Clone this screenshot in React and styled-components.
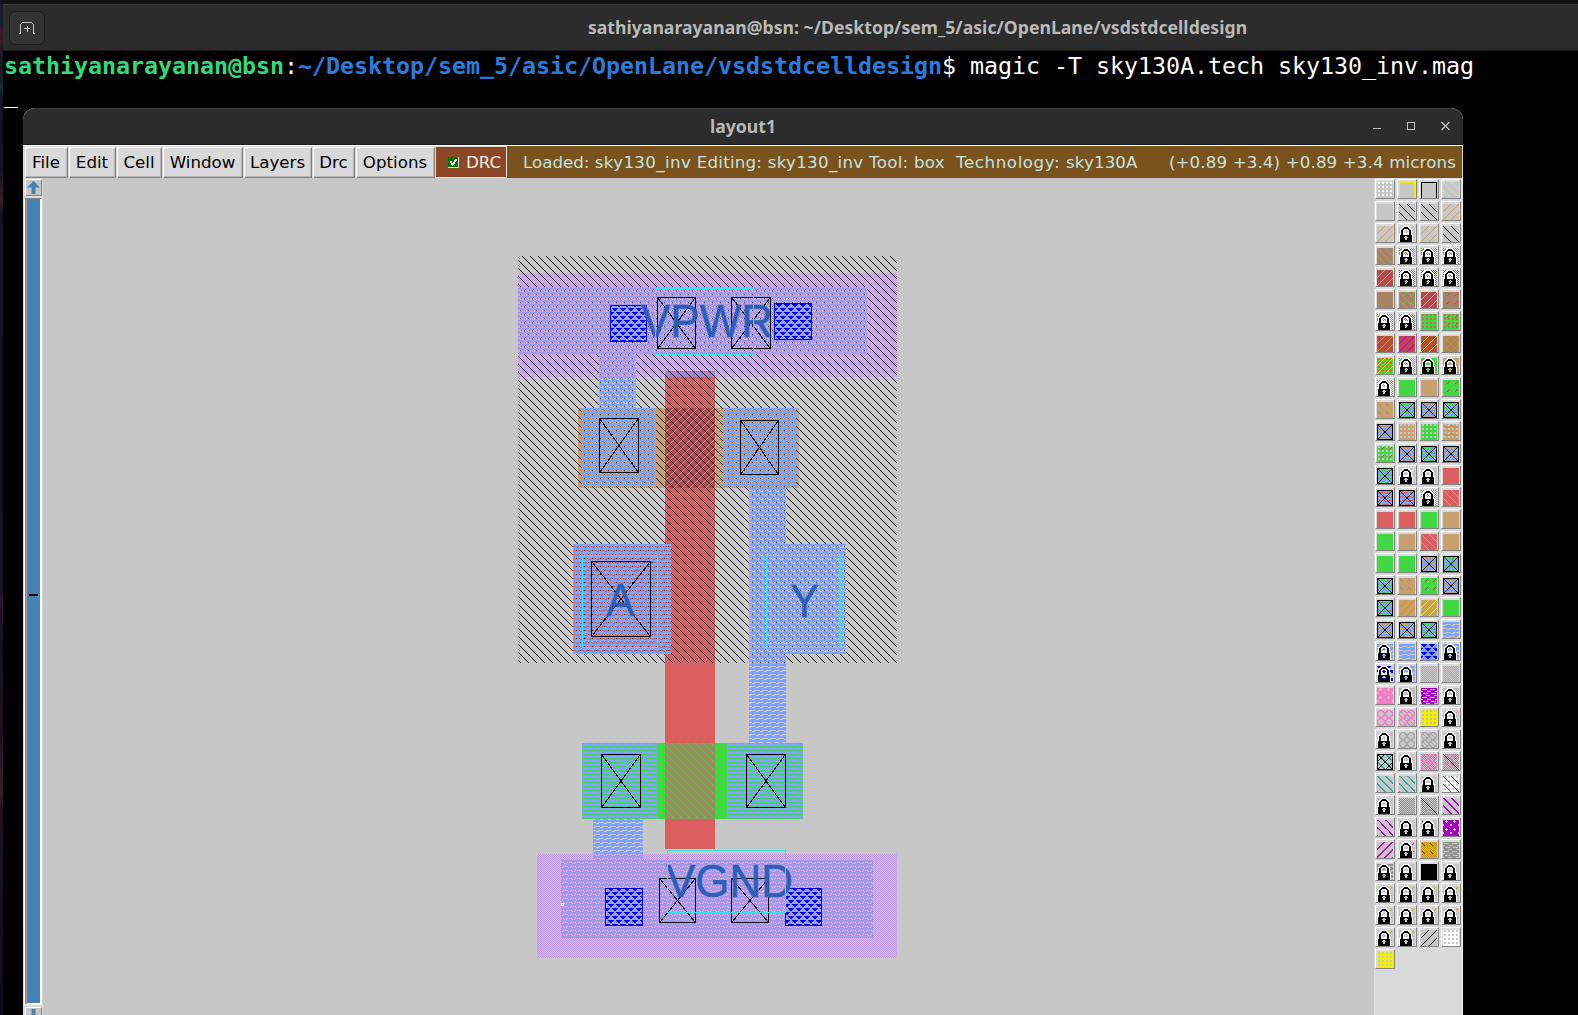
import React from "react";
import styled, { createGlobalStyle } from "styled-components";

const C = {
  gray: "#c7c7c7",
  panel: "#d9d9d9",
  brown: "#a88466",
  crimson: "#b84850",
  green: "#41d941",
  tan: "#c8a070",
  red: "#dc5f5f",
  blue: "#7da4fa",
  via: "#0000f5",
  purple: "#be98e0",
  pink: "#ff78c8",
  violet: "#a800c0",
  magenta: "#d000a0",
  teal: "#28a8a0",
  gold: "#c89810",
  yellow: "#f0f000",
  dark: "#909090",
  label: "#2d5fb8",
  cyan: "#30e8e8",
};

const STIPPLES = {
  back: ["X.......", ".X......", "..X.....", "...X....", "....X...", ".....X..", "......X.", ".......X"],
  slash: [".......X", "......X.", ".....X..", "....X...", "...X....", "..X.....", ".X......", "X......."],
  backBold: ["XX......", ".XX.....", "..XX....", "...XX...", "....XX..", ".....XX.", "......XX", "X......X"],
  slashBold: ["......XX", ".....XX.", "....XX..", "...XX...", "..XX....", ".XX.....", "XX......", "X......X"],
  backDash: ["........", ".X......", "..X.....", "...X....", "........", "........", "........", "........"],
  slashDash: ["........", "......X.", ".....X..", "....X...", "........", "........", "........", "........"],
  dots: [".XX.", ".XX.", "....", "...."],
  check: ["X.", ".X"],
  metal: ["XXXXXXXX", "X.....XX", "XXXXXXXX", "..XXXX..", "XXXXXXXX", "XX.....X", "XXXXXXXX", ".XXXX..."],
  metalWave: ["XXXXXXXX", "XXXXXXXX", "XX......", "...XXXXX", "XXXXXXXX", "XXXXXXXX", "....XX..", "XXXX...X"],
  tri: ["XXXXXX..", ".XXXX...", "..XX....", "........", "XX..XXXX", "X....XXX", "......XX", "........"],
  ring: ["..XXXX..", ".XX..XX.", "XX....XX", "X......X", "X......X", "XX....XX", ".XX..XX.", "..XXXX.."],
  plus: ["...X....", "..XXX...", "...X....", "........", "X......X", "X......X", "........", "........"],
  speck: ["........", "..X.....", ".X......", "........", "........", "X.......", "........", "........"],
};
STIPPLES.metalCheck = STIPPLES.metalWave.map((row, y) =>
  [...row].map((ch, i) => ((i + y) % 2 === 0 ? ch : ".")).join("")
);

const pid = (shape, color) => `p-${shape}-${color.replace("#", "")}`;
const fill = (shape, color) => `url(#${pid(shape, color)})`;

function runs(row) {
  const out = [];
  let i = 0;
  while (i < row.length) {
    const ch = row[i];
    let j = i;
    while (j < row.length && row[j] === ch) j++;
    if (ch !== ".") out.push([i, j - i, ch]);
    i = j;
  }
  return out;
}

function Stipple({ shape, color, dx = 0, id }) {
  const rows = STIPPLES[shape];
  return (
    <pattern id={id || pid(shape, color)} x={dx} y="0" width={rows[0].length} height={rows.length} patternUnits="userSpaceOnUse">
      {rows.map((r, y) =>
        runs(r).map(([x, w]) => <rect key={`${x}-${y}`} x={x} y={y} width={w} height="1" fill={color} />)
      )}
    </pattern>
  );
}

/* Palette swatches: a plain fill, with stipples over it and an optional mark */
const s = (bg, ...over) => ({ bg, over });
const k = (bg, ...over) => ({ bg, over, mark: "lock" });
const x = (bg, ...over) => ({ bg, over: [...over, ["metalWave", C.blue]], mark: "contact" });
const G = C.gray;
const lockBrown = () => k("#ffffff", ["check", C.brown], ["speck", C.green]);
const lockRed = () => k("#ffffff", ["check", C.crimson]);
const lockPurple = () => k(G, ["check", C.purple]);
const lockGold = () => k(G, ["slashDash", C.gold]);

const PALETTE = [
  s(G, ["dots", "#ffffff"]), { bg: G, over: [], mark: "frame", color: C.yellow }, { bg: G, over: [], mark: "frame", color: "#000000" }, s(G, ["back", C.yellow]),
  s(G), s(G, ["back", "#000000"]), s(G, ["back", "#000000"]), s(G, ["slash", C.tan]),
  s(G, ["slash", C.tan]), k(G, ["back", C.yellow]), s(G, ["slash", C.tan]), s(G, ["back", "#000000"]),
  s(C.brown, ["back", C.green]), lockBrown(), lockBrown(), lockBrown(),
  s(C.crimson, ["slash", C.tan]), lockRed(), k("#ffffff", ["check", C.crimson], ["slashDash", C.yellow]), lockRed(),
  s(C.brown), s(C.brown, ["back", C.green], ["slashDash", C.green]), s(C.crimson, ["slash", "#e0a090"]), s(C.brown, ["slashDash", C.crimson]),
  lockBrown(), lockRed(), s(C.green, ["dots", C.red]), s(C.green, ["dots", C.red], ["slashDash", C.crimson]),
  s(C.crimson, ["slash", C.gold]), s(C.crimson, ["slash", C.magenta]), s(C.crimson, ["slash", C.yellow]), s(C.brown, ["back", C.green], ["slash", C.gold]),
  s(C.green, ["dots", C.red], ["slash", C.yellow]), lockBrown(), k(C.green, ["speck", C.red]), k(C.tan),
  k("#ffffff", ["check", C.green]), s(C.green), s(C.tan), s(C.green, ["slashDash", C.crimson]),
  s(C.tan, ["backDash", C.brown]), x(C.green), x(C.tan), x(C.green),
  x(C.tan), s(C.tan, ["dots", G]), s(C.green, ["dots", G]), s(C.tan, ["dots", G], ["backDash", C.brown]),
  s(C.green, ["dots", G], ["slashDash", C.crimson]), x(C.tan, ["dots", G]), x(C.green, ["dots", G]), x(C.tan, ["dots", G]),
  x(C.green, ["dots", G]), k(G, ["slashDash", "#ffffff"]), k(G), s(C.red),
  x(C.red), x(C.red, ["backDash", C.tan]), k("#ffffff", ["check", C.red]), s(C.red, ["back", C.tan]),
  s(C.red), s(C.red), s(C.green), s(C.tan),
  s(C.green), s(C.tan), s(C.red, ["back", C.tan]), s(C.tan),
  s(C.green), s(C.green), x(C.tan), x(C.green),
  x(C.green, ["dots", G]), s(C.tan, ["backDash", C.brown]), s(C.green, ["slashDash", C.crimson]), x(C.tan),
  x(C.green, ["slashDash", C.crimson]), s(C.tan, ["slash", C.gold]), s(C.tan, ["slash", C.yellow]), s(C.green),
  x(C.tan, ["slash", C.gold]), x(C.tan, ["slash", C.yellow]), x(C.green), s(G, ["metalWave", C.blue]),
  k(G, ["metalWave", C.blue]), s(G, ["metalWave", C.blue], ["back", C.tan]), s(C.blue, ["tri", C.via]), k(G, ["metalWave", C.blue]),
  k(G, ["tri", C.via]), k(G, ["metalWave", C.blue]), s(G, ["check", C.purple]), s(G, ["check", C.purple], ["back", C.tan]),
  s(C.pink, ["plus", G]), lockPurple(), s(G, ["metal", C.violet]), lockPurple(),
  s(G, ["ring", C.pink]), s(G, ["ring", C.pink], ["back", C.tan]), s(C.yellow, ["dots", "#d0c090"]), k(G, ["slashDash", C.pink]),
  k(G, ["slashDash", C.pink]), s(G, ["ring", "#a8a8a8"]), s(G, ["ring", "#a8a8a8"], ["back", C.tan]), k(G),
  { bg: G, over: [["backBold", C.teal], ["slash", "#000000"]], mark: "contact" }, k(G), s(G, ["check", C.dark], ["ring", C.pink]), { bg: G, over: [["check", C.dark], ["plus", C.pink]], mark: "diag" },
  s(G, ["backBold", C.teal]), s(G, ["backBold", C.teal], ["backDash", C.tan]), k(G, ["backDash", C.teal]), s("#ffffff", ["dots", G], ["back", C.violet]),
  k(G, ["backDash", C.teal]), s(G, ["check", C.dark]), { bg: G, over: [["check", C.dark]], mark: "diag" }, s(G, ["backBold", C.violet]),
  s(G, ["backBold", C.violet], ["backDash", C.tan]), k(G, ["backDash", C.violet]), k(G, ["backDash", C.violet]), s(C.violet, ["plus", G]),
  s(G, ["slashBold", C.magenta]), k(G, ["slashDash", C.magenta]), s(C.gold, ["check", "#d0b050"], ["backDash", C.magenta]), s(G, ["metal", C.dark]),
  k(G, ["metalWave", C.dark]), k(G, ["backDash", C.yellow]), s("#000000"), k(G),
  lockGold(), lockGold(), lockGold(), lockGold(),
  lockGold(), lockGold(), lockGold(), lockGold(),
  lockGold(), lockGold(), s(G, ["slash", "#000000"]), s("#ffffff", ["dots", G]),
  s(C.yellow, ["dots", G]),
];

const USED = new Map();
PALETTE.forEach((cell) => cell.over.forEach(([shape, color]) => USED.set(pid(shape, color), [shape, color])));
[
  ["check", C.purple], ["metalWave", C.blue], ["tri", C.via], ["back", C.green],
  ["metalWave", C.purple], ["metalCheck", C.purple],
].forEach(([a, b]) => USED.set(pid(a, b), [a, b]));

const LOCK = [
  ".....WWWWWW.....",
  "....WWKKKKWW....",
  "...WWKKKKKKWW...",
  "..WWKKWWWWKKWW..",
  "..WKKWW..WWKKW..",
  "..WKKW....WKKW..",
  "..WKKW....WKKW..",
  "..WKKWWWWWWKKW..",
  ".WWKKWWWWWWKKWW.",
  ".WKKKKKKKKKKKKW.",
  ".WKKKKK..KKKKKW.",
  ".WKKKK....KKKKW.",
  ".WKKKKK..KKKKKW.",
  ".WKKKKK..KKKKKW.",
  ".WKKKKKKKKKKKKW.",
  ".WKKKKKKKKKKKKW.",
];

const Global = createGlobalStyle`
  html, body { margin: 0; padding: 0; background: #000; overflow: hidden; }
  * { box-sizing: border-box; }
`;

const Desktop = styled.div`
  display: grid;
  grid-template-columns: 3px 1fr;
  width: 1578px;
  height: 1015px;
  overflow: hidden;
  background: #131313;
`;
const Wallpaper = styled.div`
  background: linear-gradient(#131313 0 4px, #1a1c26 4px 26px, #3d1a20 32px, #2a1c24 44px, #17181f 60px, #17202a 80px, #1c3128 86px, #151720 96px, #15131f 170px, #2d2224 200px, #15131f 215px, #141620 590px, #2a1528 600px, #141318 640px, #20131e 740px, #2d2529 790px, #20131e 810px, #120c1a 1015px);
`;
const Terminal = styled.main`
  display: flex;
  flex-direction: column;
  min-width: 0;
  margin-top: 4px;
  background: #000;
  overflow: hidden;
`;
const TermHeader = styled.header`
  display: grid;
  grid-template-columns: 1fr auto 1fr;
  align-items: center;
  flex: none;
  width: 1829px;
  height: 47px;
  padding: 0 6px;
  background: #2c2c2c;
  border-top: 1px solid #3b3b3b;
  border-bottom: 1px solid #1c1c1c;
`;
const TabButton = styled.button`
  display: flex;
  align-items: center;
  justify-content: center;
  width: 36px;
  height: 34px;
  padding: 0;
  border: 1px solid #1c1c1c;
  border-radius: 6px;
  background: #333;
`;
const Title = styled.h1`
  margin: 0;
  padding-bottom: 2px;
  font: 700 17.6px "Noto Sans", "Open Sans", sans-serif;
  letter-spacing: 0.03px;
  color: #b9b9b9;
  white-space: pre;
`;
const Prompt = styled.div`
  flex: none;
  height: 30px;
  padding-left: 1px;
  font: 23.33px/30px "DejaVu Sans Mono", monospace;
  letter-spacing: -0.045px;
  color: #fff;
  white-space: pre;
`;
const User = styled.b`
  color: #33da7a;
`;
const Path = styled.b`
  color: #2a7bde;
`;
const Cursor = styled.div`
  flex: none;
  width: 14px;
  height: 1px;
  margin: 26px 0 0 1px;
  background: #fff;
`;
const MagicWindow = styled.section`
  display: flex;
  flex-direction: column;
  flex: none;
  width: 1440px;
  height: 907px;
  margin-left: 20px;
  border-radius: 12px 12px 0 0;
  overflow: hidden;
  background: ${C.panel};
`;
const WinHeader = styled.header`
  display: grid;
  grid-template-columns: 1fr auto 1fr;
  align-items: center;
  flex: none;
  height: 37px;
  border-top: 1px solid #3b3b3b;
  border-bottom: 1px solid #1c1c1c;
  border-radius: 12px 12px 0 0;
  background: #2c2c2c;
`;
const Controls = styled.div`
  display: flex;
  justify-content: flex-end;
  padding: 0 10px 2px 0;
`;
const MenuBar = styled.nav`
  display: flex;
  flex: none;
  height: 33px;
  padding: 1px 1px 0 2px;
  border-top: 1px solid #fff;
  font: 16.67px "DejaVu Sans", sans-serif;
`;
const MenuItem = styled.button`
  width: ${(p) => p.$w}px;
  height: 31px;
  margin-right: 1px;
  padding: 0 1px 0 0;
  border: 1px solid;
  border-color: #fff #828282 #828282 #fff;
  box-shadow: inset -1px -1px #b5b5b5;
  background: ${C.panel};
  color: #000;
  font: inherit;
`;
const DrcToggle = styled.label`
  display: flex;
  align-items: center;
  gap: 7px;
  width: 71px;
  padding-left: 12px;
  background: #8b4726;
  border-right: 1px solid #e5e0da;
  border-bottom: 1px solid #e5e0da;
  color: #f4efe9;
`;
const Status = styled.div`
  display: flex;
  align-items: center;
  justify-content: space-between;
  flex: 1;
  margin-top: -1px;
  padding: 1px 6px 0 16px;
  background: #7a521e;
  color: #c5e2dc;
  white-space: pre;
`;
const StatusText = styled.span`
  letter-spacing: ${(p) => p.$track}px;
`;
const Body = styled.div`
  display: grid;
  grid-template-columns: 20px 1331px 89px;
  flex: 1;
  min-height: 0;
`;
const ScrollColumn = styled.aside`
  display: flex;
  flex-direction: column;
  gap: 2px;
  padding: 1px 1px 0;
  background: ${C.panel};
`;
const ArrowButton = styled.div`
  display: flex;
  flex: none;
  align-items: center;
  justify-content: center;
  width: 17px;
  height: 17px;
  margin-left: 1px;
  border: 1px solid;
  border-color: #fff #828282 #828282 #fff;
  background: ${C.gray};
`;
const Track = styled.div`
  display: flex;
  align-items: center;
  justify-content: center;
  flex: none;
  width: 18px;
  height: 807px;
  padding-bottom: 14px;
  border: 1px solid #fff;
  border-top: 1px solid #828282;
  box-shadow: inset 1px 0 #828282, inset -1px 0 #fff, inset 2px 0 #a89c94, inset 0 -1px #fff;
  background: #4682b4;
`;
const Grip = styled.div`
  width: 9px;
  height: 2px;
  background: #000;
`;
const Palette = styled.aside`
  display: grid;
  grid-template-columns: repeat(4, 20px);
  grid-auto-rows: 20px;
  align-content: start;
  gap: 2px;
  padding: 1px 0 0 1px;
  border-right: 1px solid #f0f0f0;
  background: ${C.panel};
`;
const Swatch = styled.div`
  padding: 2px 1px 0;
  border: 1px solid;
  border-color: #fff #828282 #828282 #fff;
  background: ${C.panel};
  svg { display: block; }
`;
const Drawing = styled.svg`
  display: block;
  background: ${C.gray};
  font-family: "Liberation Sans", Arial, sans-serif;
`;

function LayerSwatch({ cell }) {
  return (
    <Swatch>
      <svg width="16" height="16" shapeRendering="crispEdges">
        <rect width="16" height="16" fill={cell.bg} />
        {cell.over.map(([shape, color], i) => (
          <rect key={i} width="16" height="16" fill={fill(shape, color)} />
        ))}
        {cell.mark === "frame" && <path d="M0.5 16V0.5H15.5V16" fill="none" stroke={cell.color} />}
        {cell.mark === "diag" && <path d="M0 0L16 16" stroke="#000" />}
        {cell.mark === "contact" && <path d="M0.5 0.5H15.5V15.5H0.5ZM1 1L15 15M15 1L1 15" fill="none" stroke="#000" />}
        {cell.mark === "lock" &&
          LOCK.map((r, y) =>
            runs(r).map(([rx, w, ch]) => (
              <rect key={`${rx}-${y}`} x={rx - 1} y={y} width={w} height="1" fill={ch === "K" ? "#000" : "#fff"} />
            ))
          )}
      </svg>
    </Swatch>
  );
}

/* Boxes are given by their edges: left, top, right, bottom */
const Box = ({ b: [l, t, r, d], f }) => <rect x={l} y={t} width={r - l} height={d - t} fill={f} />;
const Outline = ({ b: [l, t, r, d], c }) => (
  <rect x={l + 0.5} y={t + 0.5} width={r - l - 1} height={d - t - 1} fill="none" stroke={c} />
);
const Contact = ({ b }) => {
  const [l, t, r, d] = b;
  return (
    <g>
      <Outline b={b} c="#000" />
      <path d={`M${l + 1} ${t + 1}L${r - 1} ${d - 1}M${r - 1} ${t + 1}L${l + 1} ${d - 1}`} stroke="#000" />
    </g>
  );
};
const Via = ({ b }) => (
  <g>
    <Box b={b} f="#98a0f4" />
    <Box b={b} f={fill("tri", C.via)} />
    <Outline b={b} c={C.via} />
  </g>
);

const METAL = [
  [518, 287, 867, 354], [599, 354, 636, 408], [582, 408, 656, 486], [723, 408, 797, 487],
  [749, 487, 786, 743], [573, 544, 671, 654], [786, 544, 846, 654], [582, 743, 658, 819],
  [727, 743, 803, 819], [593, 819, 643, 860], [561, 860, 873, 938],
];
/* Where metal lies over the substrate contacts */
const RAILS = [[518, 287, 867, 354], [599, 354, 636, 377], [593, 854, 643, 860], [561, 860, 873, 938]];
const CONTACTS = [
  [657, 297, 696, 349], [731, 297, 771, 349], [599, 418, 639, 473], [740, 420, 779, 475],
  [591, 561, 651, 637], [601, 754, 641, 808], [746, 754, 786, 808], [659, 878, 696, 923], [731, 878, 769, 923],
];
const VIAS = [[610, 305, 647, 342], [774, 303, 812, 340], [605, 888, 643, 926], [785, 888, 822, 926]];
const PORTS = [[655, 288, 754, 355], [582, 555, 658, 648], [766, 555, 841, 648], [667, 850, 786, 913]];
const SUBSTRATE = [[518, 273, 897, 377], [537, 854, 897, 958]];
const LABELS = [["VPWR", 641, 337, 132], ["A", 606.5, 616, 28], ["Y", 790, 616.5, 29], ["VGND", 666, 897, 127]];

function Layout() {
  return (
    <Drawing width="1331" height="837" viewBox="43 178 1331 837">
      <defs>
        {[...USED.values()].map(([shape, color]) => (
          <Stipple key={pid(shape, color)} shape={shape} color={color} />
        ))}
        <Stipple id="well" shape="back" color="#000000" dx={2} />
        <Stipple id="gate" shape="slash" color={C.tan} dx={2} />
        <Stipple id="tap" shape="speck" color={C.green} />
        <Stipple id="ptap" shape="speck" color="#d0907c" />
      </defs>
      <g shapeRendering="crispEdges">
        <Box b={[578, 408, 799, 488]} f={C.tan} />
        <Box b={[582, 743, 803, 819]} f={C.green} />
        <Box b={[665, 371, 715, 849]} f={C.red} />
        <Box b={[573, 544, 671, 654]} f={C.red} />
        <Box b={[665, 408, 715, 488]} f={C.crimson} />
        <Box b={[665, 408, 715, 488]} f="url(#gate)" />
        <Box b={[665, 743, 715, 819]} f={C.brown} />
        <Box b={[665, 743, 715, 819]} f={fill("back", C.green)} />
        {SUBSTRATE.map((b, i) => <Box key={i} b={b} f={fill("check", C.purple)} />)}
        <Box b={[518, 256, 897, 663]} f="url(#well)" />
        {METAL.map((b, i) => <Box key={i} b={b} f={fill("metalWave", C.blue)} />)}
        <g opacity="0.25">
          {RAILS.map((b, i) => <Box key={i} b={b} f={fill("metalWave", C.purple)} />)}
        </g>
        <g opacity="0.5">
          {RAILS.map((b, i) => <Box key={i} b={b} f={fill("metalCheck", C.purple)} />)}
        </g>
        <Box b={[591, 295, 835, 349]} f="url(#tap)" />
        <Box b={[590, 875, 832, 928]} f="url(#ptap)" />
        {VIAS.map((b, i) => <Via key={i} b={b} />)}
        {CONTACTS.map((b, i) => <Contact key={i} b={b} />)}
      </g>
      {LABELS.map(([t, lx, ly, w]) => (
        <text key={t} x={lx} y={ly} fontSize="46" textLength={w} lengthAdjust="spacingAndGlyphs" fill={C.label} stroke={C.label} strokeWidth="0.5">{t}</text>
      ))}
      <g shapeRendering="crispEdges">
        {PORTS.map((b, i) => <Outline key={i} b={b} c={C.cyan} />)}
        <Outline b={[561, 903, 564, 906]} c="#fff" />
      </g>
    </Drawing>
  );
}

const MENUS = [["File", 43], ["Edit", 47], ["Cell", 45], ["Window", 80], ["Layers", 68], ["Drc", 42], ["Options", 79]];
const STATUS = [
  ["Loaded: ", 0], ["sky130_inv ", 0.37], ["Editing: ", 0.22], ["sky130_inv ", 0.3],
  ["Tool: box  ", 0.28], ["Technology: ", 0.58], ["sky130A", 0.1],
];

export default function App() {
  return (
    <Desktop>
      <Global />
      <Wallpaper />
      <Terminal>
        <TermHeader>
          <TabButton aria-label="New tab">
            <svg width="16" height="14" fill="none" stroke="#c6c6c6" shapeRendering="crispEdges">
              <path d="M0 12.5H1.5V3.5L3.5 1.5H12.5L14.5 3.5V12.5H16M5 7.5H11M8 5V10.5" />
            </svg>
          </TabButton>
          <Title>sathiyanarayanan@bsn: ~/Desktop/sem_5/asic/OpenLane/vsdstdcelldesign</Title>
          <span />
        </TermHeader>
        <Prompt>
          <User>sathiyanarayanan@bsn</User>:<Path>~/Desktop/sem_5/asic/OpenLane/vsdstdcelldesign</Path>$ magic -T sky130A.tech sky130_inv.mag
        </Prompt>
        <Cursor />
        <MagicWindow>
          <WinHeader>
            <span />
            <Title>layout1</Title>
            <Controls>
              <svg width="80" height="12" fill="none" stroke="#c0c0c0">
                <path d="M0 8.5H8" />
                <rect x="34.5" y="2.5" width="7" height="7" />
                <path d="M68.5 2L76.5 10M76.5 2L68.5 10" strokeWidth="1.4" />
              </svg>
            </Controls>
          </WinHeader>
          <MenuBar>
            {MENUS.map(([name, w]) => <MenuItem key={name} $w={w}>{name}</MenuItem>)}
            <DrcToggle>
              <svg width="11" height="11" shapeRendering="crispEdges">
                <rect width="11" height="11" fill="#d9d9d9" />
                <rect width="10" height="10" fill="#007800" />
                <path d="M2.5 4L4.5 7.5L8.5 2.5" fill="none" stroke="#fff" strokeWidth="2" />
              </svg>
              DRC
            </DrcToggle>
            <Status>
              <span>
                {STATUS.map(([word, track], i) => <StatusText key={i} $track={track}>{word}</StatusText>)}
              </span>
              <StatusText $track={0.13}>(+0.89 +3.4) +0.89 +3.4 microns</StatusText>
            </Status>
          </MenuBar>
          <Body>
            <ScrollColumn>
              <ArrowButton>
                <svg width="13" height="13" fill="#4682b4"><path d="M6.5 0L13 6.5H8.5V13H4.5V6.5H0Z" /></svg>
              </ArrowButton>
              <Track><Grip /></Track>
              <ArrowButton>
                <svg width="13" height="13" fill="#4682b4"><path d="M6.5 13L13 6.5H8.5V0H4.5V6.5H0Z" /></svg>
              </ArrowButton>
            </ScrollColumn>
            <Layout />
            <Palette>
              {PALETTE.map((cell, i) => <LayerSwatch key={i} cell={cell} />)}
            </Palette>
          </Body>
        </MagicWindow>
      </Terminal>
    </Desktop>
  );
}
